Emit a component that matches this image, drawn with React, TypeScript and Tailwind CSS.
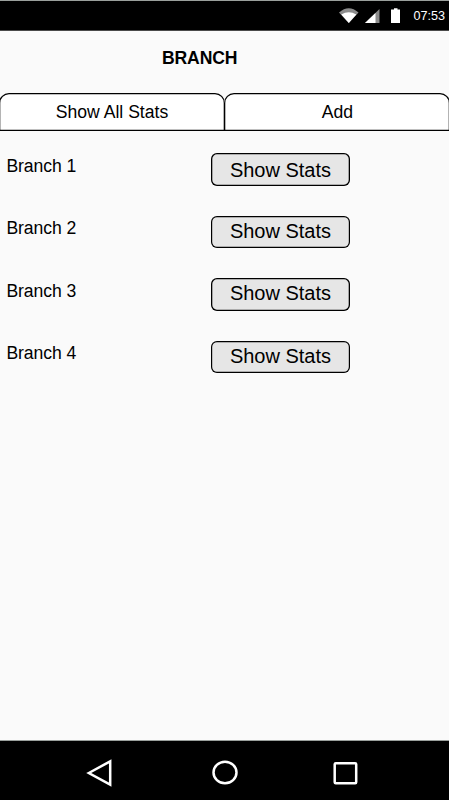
const evenButton = 'h-[32px] pb-px shadow-[inset_0_0_0_1.2px_#000]';

const branches = [
  { name: 'Branch 1', label: 'pt-[3px]', button: 'h-[33px] pt-[2px] shadow-[inset_0_0_0_1.3px_#000]' },
  { name: 'Branch 2', label: 'pt-[2px]', button: evenButton },
  { name: 'Branch 3', label: 'pt-[3px]', button: 'h-[33px] pb-[2px] shadow-[inset_0_0_0_1.3px_#000]' },
  { name: 'Branch 4', label: 'pt-[2px]', button: evenButton },
];

function StatusBar() {
  return (
    <header className="flex h-[31px] shrink-0 items-center justify-end border-y border-t-[#9a9f9c] border-b-[#4a4a4a] bg-black pr-1 text-[12.6px] text-white">
      <svg width="70" height="29" viewBox="0 0 70 29" className="mr-[6px]">
        <path d="M2 11.5Q11.8 3 21.5 11.5L11.8 22Z" fill="#8c8c8c" />
        <path d="M4.3 13.5Q11.8 8.8 19.3 13.5L11.8 22Z" fill="#fff" />
        <path d="M28 22L42.5 8V22Z" fill="#8c8c8c" />
        <path d="M28 22L38.5 12V22Z" fill="#fff" />
        <path d="M54 8.5H57V7.2H60.5V8.5H63V22H54Z" fill="#fff" />
      </svg>
      <span className="pt-[2px] leading-[27px]">07:53</span>
    </header>
  );
}

function NavigationBar() {
  return (
    <nav className="h-[60px] shrink-0 border-t border-[#9a9f9c] bg-black">
      <svg width="449" height="59" viewBox="0 0 449 59" fill="none" stroke="#fff" strokeWidth="2.5">
        <path d="M88.8 32L110.2 20.3V43.7Z" />
        <ellipse cx="225" cy="31.5" rx="11.5" ry="10.8" />
        <rect x="334.7" y="22.3" width="21.5" height="20" rx="1" />
      </svg>
    </nav>
  );
}

export default function App() {
  return (
    <div className="flex h-[800px] w-[449px] flex-col overflow-hidden bg-[#fafafa] font-['Liberation_Sans',Arial,sans-serif] text-black">
      <StatusBar />
      <main className="flex flex-1 flex-col">
        <h1 className="h-[62px] pl-[162px] pt-[17px] text-[17.6px] font-bold leading-5 tracking-[-0.15px]">BRANCH</h1>
        <div className="-mx-px flex h-[38px] text-[17.6px]">
          <button className="w-[226px] rounded-t-[10px] bg-white shadow-[inset_0_0_0_1.3px_#000]">Show All Stats</button>
          <button className="-ml-px w-[226px] rounded-t-[10px] bg-white pl-px shadow-[inset_0_0_0_1.3px_#000]">Add</button>
        </div>
        <ul className="flex flex-col gap-[29.6px] pt-[22px]">
          {branches.map(({ name, label, button }) => (
            <li key={name} className="flex h-[33px] items-start pl-[6.4px]">
              <span className={`w-[204.6px] text-[17.6px] leading-5 tracking-[-0.08px] ${label}`}>{name}</span>
              <button className={`w-[139px] rounded-[6px] bg-[#e6e6e6] text-[20px] leading-[31px] ${button}`}>
                Show Stats
              </button>
            </li>
          ))}
        </ul>
      </main>
      <NavigationBar />
    </div>
  );
}
